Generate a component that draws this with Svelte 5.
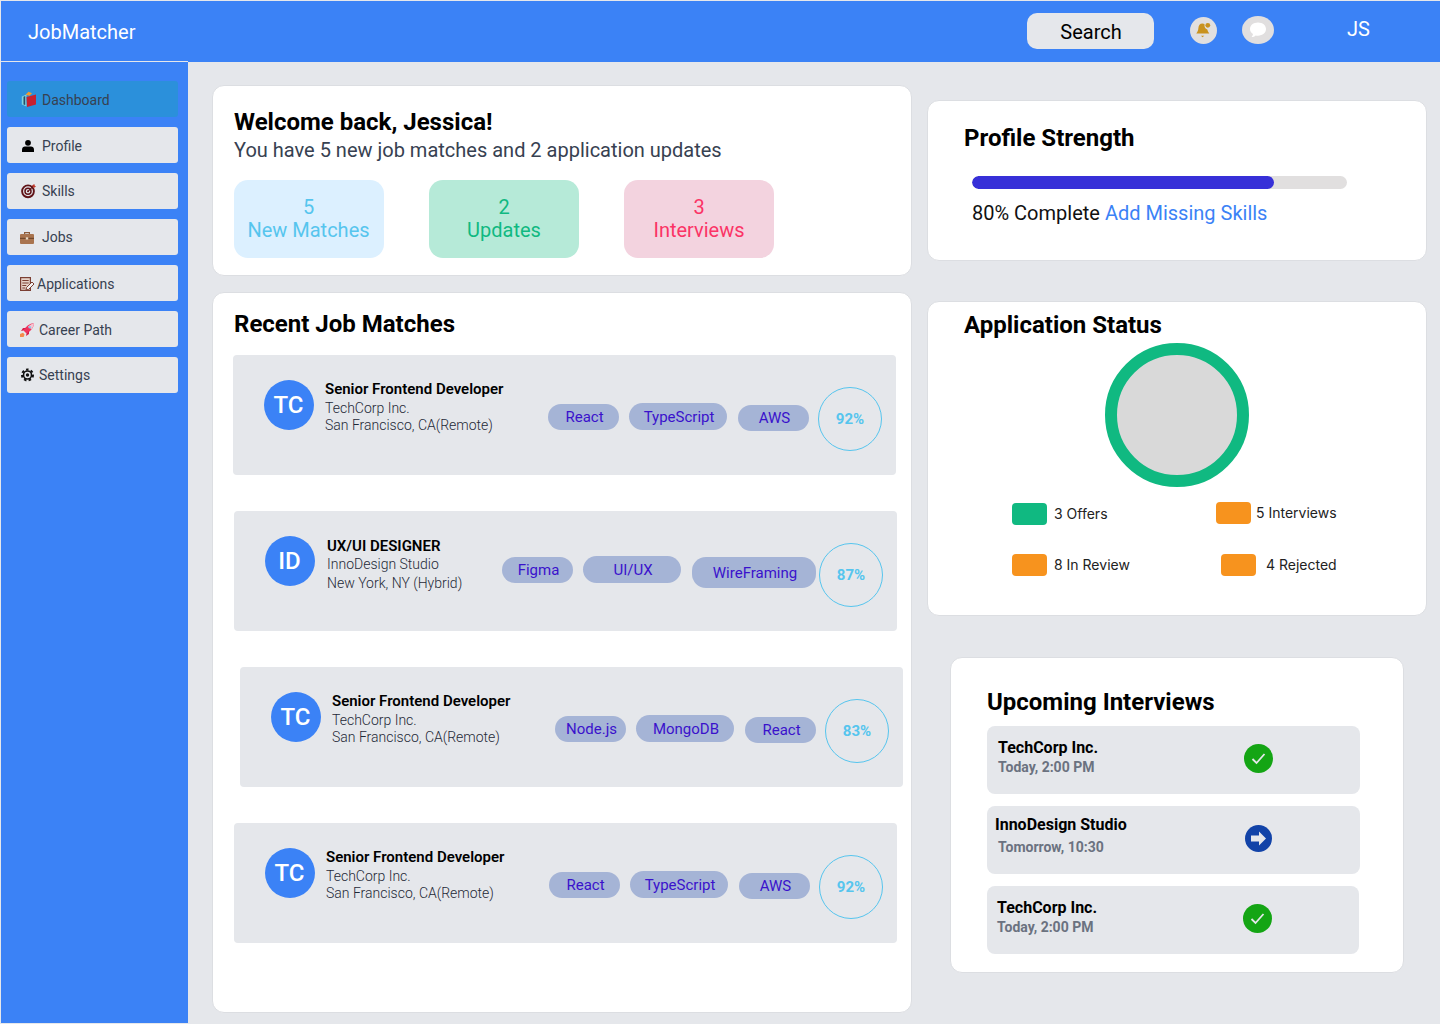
<script>
  const navItems = [
    { label: 'Dashboard', icon: 'books', active: true, gap: 6, nudge: 2 },
    { label: 'Profile', icon: 'person', gap: 6, nudge: 2 },
    { label: 'Skills', icon: 'target', gap: 6, nudge: 0 },
    { label: 'Jobs', icon: 'case', gap: 6, nudge: 0 },
    { label: 'Applications', icon: 'doc', gap: 1, nudge: 2 },
    { label: 'Career Path', icon: 'rocket', gap: 3, nudge: 2 },
    { label: 'Settings', icon: 'gear', gap: 3, nudge: 0 },
  ]

  const stats = [
    { value: 5, label: 'New Matches', tone: 'sky' },
    { value: 2, label: 'Updates', tone: 'mint' },
    { value: 3, label: 'Interviews', tone: 'rose' },
  ]

  const jobs = [
    {
      initials: 'TC',
      title: 'Senior Frontend Developer',
      company: 'TechCorp Inc.',
      place: 'San Francisco, CA(Remote)',
      score: 92,
      offset: 20,
      textGap: 11,
      tags: [
        { label: 'React', w: 71, h: 26, top: 49 },
        { label: 'TypeScript', w: 98, h: 27, top: 48 },
        { label: 'AWS', w: 71, h: 26, top: 50 },
      ],
      scoreGap: 9,
    },
    {
      initials: 'ID',
      title: 'UX/UI DESIGNER',
      company: 'InnoDesign Studio',
      place: 'New York, NY (Hybrid)',
      score: 87,
      offset: 21,
      textGap: 12,
      loose: true,
      tags: [
        { label: 'Figma', w: 71, h: 26, top: 46 },
        { label: 'UI/UX', w: 98, h: 27, top: 45 },
        { label: 'WireFraming', w: 124, h: 31, top: 46 },
      ],
      scoreGap: 3,
    },
    {
      initials: 'TC',
      title: 'Senior Frontend Developer',
      company: 'TechCorp Inc.',
      place: 'San Francisco, CA(Remote)',
      score: 83,
      offset: 27,
      textGap: 11,
      tags: [
        { label: 'Node.js', w: 71, h: 26, top: 49 },
        { label: 'MongoDB', w: 98, h: 27, top: 48 },
        { label: 'React', w: 71, h: 26, top: 50 },
      ],
      scoreGap: 9,
    },
    {
      initials: 'TC',
      title: 'Senior Frontend Developer',
      company: 'TechCorp Inc.',
      place: 'San Francisco, CA(Remote)',
      score: 92,
      offset: 21,
      textGap: 11,
      tags: [
        { label: 'React', w: 71, h: 26, top: 49 },
        { label: 'TypeScript', w: 98, h: 27, top: 48 },
        { label: 'AWS', w: 71, h: 26, top: 50 },
      ],
      scoreGap: 9,
    },
  ]

  const interviews = [
    { company: 'TechCorp Inc.', time: 'Today, 2:00 PM', kind: 'check', pad: 11, subPad: 11, width: 373, right: 87, lines: 2, lift: 6 },
    { company: 'InnoDesign Studio', time: 'Tomorrow, 10:30', kind: 'arrow', pad: 8, subPad: 11, width: 373, right: 88, lines: 5, lift: 9 },
    { company: 'TechCorp Inc.', time: 'Today, 2:00 PM', kind: 'check', pad: 10, subPad: 10, width: 372, right: 87, lines: 2, lift: 6 },
  ]
</script>

<div class="app">
  <header class="topbar">
    <div class="brand">JobMatcher</div>
    <button class="search">Search</button>
    <span class="bell">
      <svg width="19" height="19" viewBox="0 0 19 19">
        <path d="M8.500 2.500c-2.700 0-3.900 2-4.100 4.600-.2 2.500-.8 4-2.100 5.400h13c-1.100-1.200-1.700-2.500-2-3.900-2-.6-3.100-2.300-2.800-5.500-.6-.4-1.200-.6-2-.6z" fill="#c9921e" />
        <circle cx="13.800" cy="4.300" r="2.400" fill="#c9921e" />
        <path d="M7 14.800h3.200l-1.600 1.500z" fill="#c9921e" />
      </svg>
    </span>
    <span class="chat">
      <svg width="20" height="18" viewBox="0 0 20 18">
        <path d="M10 1.500c4.600 0 8 2.800 8 6.600s-3.400 6.600-8 6.600c-.8 0-1.600-.1-2.400-.3-1 .9-2.400 1.600-4 1.600.8-.8 1.300-1.800 1.400-2.900C3 11.900 2 10.100 2 8.100 2 4.300 5.400 1.500 10 1.500z" fill="#fff" />
      </svg>
    </span>
    <span class="user">JS</span>
  </header>

  <div class="body">
    <aside class="sidebar">
      {#each navItems as item}
        <a class="nav" class:active={item.active} href="#top" style="gap: {item.gap}px">
          <svg class="nav-icon" width="16" height="16" viewBox="0 0 16 16">
            {#if item.icon === 'books'}
              <path d="M5.500 3.800L8.500 .8l3.500 1.400-2.500 2.500z" fill="#f59a2c" />
              <path d="M1.800 5.500l4.700-2V15.500l-4.700-2z" fill="#7fd3e0" />
              <path d="M3.500 5.800l1.700-.7v9l-1.700-.7z" fill="#24506b" />
              <path d="M6.500 6L16 3.500v10L7 16z" fill="#c8202f" />
            {:else if item.icon === 'person'}
              <circle cx="8" cy="5.800" r="2.900" fill="#000" />
              <path d="M2 15v-2.200C2 10.800 3.400 9.600 5 9.600h6c1.600 0 3 1.200 3 3.200V15z" fill="#000" />
            {:else if item.icon === 'target'}
              <circle cx="8" cy="8.300" r="5.900" fill="none" stroke="#5f1216" stroke-width="1.900" />
              <circle cx="8" cy="8.300" r="3" fill="none" stroke="#5f1216" stroke-width="1.500" />
              <circle cx="8" cy="8.300" r="1" fill="#5f1216" />
              <path d="M8 8.300l5.500-5.500" stroke="#5f1216" stroke-width="1.200" />
              <path d="M12 2.500l2.300-1.500.5 1.800 1.200.6-2.200 1.500z" fill="#c0392b" />
            {:else if item.icon === 'case'}
              <path d="M4.600 5V3.600h4.800V5" fill="none" stroke="#8a5a3a" stroke-width="1.200" />
              <rect x="0" y="5" width="14" height="10" rx="1" fill="#a9744f" />
              <rect x="0" y="8.800" width="14" height="1.100" fill="#6d4529" />
              <rect x="5.800" y="8.300" width="2.400" height="2.200" fill="#e8d9c5" />
            {:else if item.icon === 'doc'}
              <rect x="0.600" y="2.600" width="9.800" height="12.800" fill="#e7d3c8" stroke="#7b3f33" stroke-width="1.200" />
              <path d="M2.300 5.500h6.400M2.300 8h6.400M2.300 10.500h4M2.300 13h3" stroke="#7b3f33" stroke-width="1.200" />
              <path d="M6 15l.6-2.600L12 7l2 2-5.400 5.400z" fill="#f4f4f4" stroke="#7b3f33" stroke-width="1" />
            {:else if item.icon === 'rocket'}
              <path d="M0 13l3-1.200 1.600 1.600-1 2.600H0z" fill="#f58a4b" />
              <path d="M3.500 9.500C6 5 9.500 2.500 14 2c-.3 4.500-3 8-7.500 10.500z" fill="#f0315d" />
              <path d="M8 5.500C9.800 4 11.800 3 14 2c-.2 2.300-1 4.400-2.500 6.300z" fill="#f5c6d3" />
              <circle cx="9.800" cy="6.200" r="1.300" fill="#8ec8e8" />
              <path d="M3.500 9.500L1 10l2-3h3zM6.500 12.500L6 15l3-2v-3z" fill="#d81f4b" />
            {:else}
              <circle cx="7.500" cy="8" r="4.800" fill="#111" />
              <circle cx="7.500" cy="8" r="5.500" fill="none" stroke="#111" stroke-width="2" stroke-dasharray="2.500 2.260" />
              <circle cx="7.500" cy="8" r="3.200" fill="#e5e7eb" />
              <circle cx="7.500" cy="8" r="1.700" fill="#111" />
            {/if}
          </svg>
          <span style="padding-top: {item.nudge}px">{item.label}</span>
        </a>
      {/each}
    </aside>

    <main class="main">
      <div class="col-left">
        <section class="card welcome">
          <h1>Welcome back, Jessica!</h1>
          <p class="lead">You have 5 new job matches and 2 application updates</p>
          <div class="stats">
            {#each stats as stat}
              <div class="stat {stat.tone}">
                <span>{stat.value}</span>
                <span>{stat.label}</span>
              </div>
            {/each}
          </div>
        </section>

        <section class="card matches">
          <h2>Recent Job Matches</h2>
          <div class="job-list">
            {#each jobs as job}
              <article class="job" style="margin-left: {job.offset}px">
                <div class="avatar">{job.initials}</div>
                <div class="job-info" class:loose={job.loose} style="margin-left: {job.textGap}px">
                  <h3>{job.title}</h3>
                  <p>{job.company}</p>
                  <p>{job.place}</p>
                </div>
                <div class="tags">
                  {#each job.tags as tag}
                    <span class="tag" style="width: {tag.w}px; height: {tag.h}px; margin-top: {tag.top - 25}px">{tag.label}</span>
                  {/each}
                </div>
                <div class="score" style="margin-left: {job.scoreGap}px">{job.score}%</div>
              </article>
            {/each}
          </div>
        </section>
      </div>

      <div class="col-right">
        <section class="card strength">
          <h2>Profile Strength</h2>
          <div class="track"><div class="fill" style="width: 80.5%"></div></div>
          <p class="progress">80% Complete <a href="#top">Add Missing Skills</a></p>
        </section>

        <section class="card status">
          <h2>Application Status</h2>
          <div class="donut"></div>
          <div class="legend">
            <div class="legend-row first">
              <div class="legend-item wide">
                <span class="swatch green"></span><span>3 Offers</span>
              </div>
              <div class="legend-item raised">
                <span class="swatch orange"></span><span class="near">5 Interviews</span>
              </div>
            </div>
            <div class="legend-row">
              <div class="legend-item wide pushed">
                <span class="swatch orange"></span><span>8 In Review</span>
              </div>
              <div class="legend-item">
                <span class="swatch orange"></span><span class="far">4 Rejected</span>
              </div>
            </div>
          </div>
        </section>

        <section class="card upcoming">
          <h2>Upcoming Interviews</h2>
          <div class="interview-list">
            {#each interviews as row}
              <div class="interview" style="width: {row.width}px">
                <div class="interview-info" style="gap: {row.lines}px; padding-bottom: {row.lift}px">
                  <strong style="margin-left: {row.pad}px">{row.company}</strong>
                  <span style="margin-left: {row.subPad}px">{row.time}</span>
                </div>
                {#if row.kind === 'check'}
                  <svg class="mark" style="margin-right: {row.right}px" width="29" height="29" viewBox="0 0 29 29">
                    <circle cx="14.500" cy="14.500" r="14.500" fill="#14a514" />
                    <path d="M8.500 15l4 4 8-9" fill="none" stroke="#e5e7eb" stroke-width="1.800" />
                  </svg>
                {:else}
                  <svg class="mark" style="margin-right: {row.right}px" width="27" height="27" viewBox="0 0 27 27">
                    <circle cx="13.500" cy="13.500" r="13.500" fill="#1243a8" />
                    <path d="M6 10.500h8V6.500l7 7-7 7v-4H6z" fill="#e5e7eb" />
                  </svg>
                {/if}
              </div>
            {/each}
          </div>
        </section>
      </div>
    </main>
  </div>
</div>

<style>
  :global(body) {
    margin: 0;
    background: #e5e7eb;
  }
  .app {
    width: 1440px;
    height: 1024px;
    overflow: hidden;
    font-family: Roboto, 'Liberation Sans', sans-serif;
    color: #000;
    box-sizing: border-box;
  }
  .topbar {
    height: 62px;
    box-sizing: border-box;
    border-top: 1px solid #e5e7eb;
    border-left: 1px solid #e5e7eb;
    background: #3b82f6;
    display: flex;
    align-items: center;
    color: #fff;
  }
  .brand {
    font-size: 20px;
    margin-left: 27px;
    width: 999px;
    padding-top: 1px;
  }
  .search {
    width: 127px;
    height: 36px;
    margin-top: -1px;
    padding: 2px 0 0 1px;
    border: 0;
    border-radius: 10px;
    background: #e5e7eb;
    color: #000;
    font: 20px Roboto, sans-serif;
  }
  .bell {
    width: 27px;
    height: 27px;
    margin-left: 36px;
    margin-top: -3px;
    border-radius: 50%;
    background: #e1dfdf;
    display: flex;
    align-items: center;
    justify-content: center;
  }
  .chat {
    width: 32px;
    height: 28px;
    margin-left: 25px;
    margin-top: -3px;
    border-radius: 50%;
    background: #e1dfdf;
    display: flex;
    align-items: center;
    justify-content: center;
  }
  .user {
    font-size: 20px;
    margin-left: 73px;
    margin-top: -5px;
  }
  .body {
    display: flex;
    height: 962px;
  }
  .sidebar {
    width: 188px;
    height: 962px;
    box-sizing: border-box;
    border-top: 1px solid #e5e7eb;
    border-left: 1px solid #e5e7eb;
    background: #3b82f6;
    padding: 19px 0 0 6px;
    margin-top: -1px;
    display: flex;
    flex-direction: column;
    gap: 10px;
    flex: none;
  }
  .nav {
    width: 171px;
    height: 36px;
    box-sizing: border-box;
    flex: none;
    border-radius: 3px;
    background: #e5e7eb;
    color: #374151;
    font-size: 14px;
    text-decoration: none;
    display: flex;
    align-items: center;
    padding-left: 13px;
  }
  .nav.active {
    background: #2b90db;
  }
  .nav-icon {
    flex: none;
    overflow: visible;
  }
  .main {
    display: flex;
    flex: none;
    width: 1252px;
    align-items: flex-start;
  }
  .col-left {
    width: 700px;
    margin-left: 24px;
    padding-top: 23px;
    display: flex;
    flex-direction: column;
    gap: 16px;
    flex: none;
  }
  .col-right {
    width: 500px;
    margin-left: 15px;
    padding-top: 38px;
    flex: none;
  }
  .card {
    box-sizing: border-box;
    background: #fff;
    border: 1px solid #dcdee2;
    border-radius: 12px;
  }
  h1,
  h2,
  h3,
  p {
    margin: 0;
  }
  h1,
  h2 {
    font-size: 24px;
    font-weight: 700;
    line-height: 28px;
  }
  .welcome {
    height: 191px;
    padding: 22px 21px 0;
  }
  .lead {
    font-size: 20px;
    line-height: 28px;
    color: #374151;
  }
  .stats {
    display: flex;
    gap: 45px;
    margin-top: 16px;
  }
  .stat {
    width: 150px;
    height: 78px;
    border-radius: 14px;
    box-sizing: border-box;
    padding-top: 16px;
    display: flex;
    flex-direction: column;
    align-items: center;
    font-size: 20px;
    line-height: 23px;
  }
  .sky {
    background: #dcf0ff;
    color: #56c5ee;
    padding-right: 1px;
  }
  .mint {
    background: #b6ead8;
    color: #10b981;
  }
  .rose {
    background: #f3d3df;
    color: #fb3366;
  }
  .matches {
    height: 721px;
    padding-top: 17px;
  }
  .matches h2 {
    margin-left: 21px;
  }
  .job-list {
    margin-top: 17px;
    display: flex;
    flex-direction: column;
    gap: 36px;
  }
  .job {
    width: 663px;
    height: 120px;
    box-sizing: border-box;
    background: #e5e7eb;
    border-radius: 4px;
    padding: 25px 14px 0 31px;
    display: flex;
    align-items: flex-start;
  }
  .avatar {
    width: 50px;
    height: 50px;
    flex: none;
    box-sizing: border-box;
    padding-right: 1px;
    border-radius: 50%;
    background: #3b82f6;
    color: #fff;
    font-size: 24px;
    font-weight: 500;
    display: flex;
    align-items: center;
    justify-content: center;
  }
  .job-info {
    flex: 1;
    font-size: 14px;
    font-weight: 300;
    line-height: 17px;
    color: #1f2937;
  }
  .job-info h3 {
    font-size: 15px;
    font-weight: 600;
    line-height: 18px;
    color: #000;
    margin-bottom: 2px;
  }
  .job-info.loose {
    padding-top: 1px;
  }
  .job-info.loose h3 {
    margin-bottom: 1px;
  }
  .job-info.loose p + p {
    margin-top: 2px;
  }
  .tags {
    display: flex;
    align-items: flex-start;
  }
  .tag {
    flex: none;
    box-sizing: border-box;
    padding-left: 2px;
    border-radius: 14px;
    background: #a5b4d6;
    color: #3a12cc;
    font-size: 15px;
    display: flex;
    align-items: center;
    justify-content: center;
    margin-right: 10px;
  }
  .tag:nth-child(2) {
    margin-right: 11px;
  }
  .tag:last-child {
    margin-right: 0;
  }
  .score {
    width: 64px;
    height: 64px;
    box-sizing: border-box;
    flex: none;
    margin-top: 7px;
    border: 1px solid #56c5ee;
    border-radius: 50%;
    color: #56c5ee;
    font-size: 15px;
    font-weight: 700;
    display: flex;
    align-items: center;
    justify-content: center;
  }
  .strength {
    height: 161px;
    padding: 23px 36px 0;
  }
  .track {
    width: 375px;
    height: 13px;
    margin: 24px 0 0 8px;
    border-radius: 7px;
    background: #e1dfdf;
    overflow: hidden;
  }
  .fill {
    height: 100%;
    border-radius: 7px;
    background: #3730d8;
  }
  .progress {
    margin: 12px 0 0 8px;
    font-size: 20px;
    line-height: 24px;
    color: #111;
  }
  .progress a {
    color: #3b82f6;
    text-decoration: none;
  }
  .status {
    height: 315px;
    margin-top: 40px;
    padding: 9px 36px 0;
  }
  .donut {
    width: 144px;
    height: 144px;
    box-sizing: border-box;
    margin: 4px 0 0 141px;
    border: 12px solid #10b981;
    border-radius: 50%;
    background: #d9d9d9;
  }
  .legend {
    margin: 16px 0 0 48px;
    font-family: Inter, Roboto, sans-serif;
    font-size: 14px;
    color: #222;
  }
  .legend-row {
    display: flex;
    height: 22px;
    align-items: center;
  }
  .legend-row.first {
    margin-bottom: 29px;
  }
  .legend-item {
    display: flex;
    align-items: center;
    gap: 7px;
  }
  .legend-item span:last-child {
    margin-top: -2px;
  }
  .legend-item.wide {
    width: 204px;
  }
  .legend-item.wide.pushed {
    width: 209px;
  }
  .legend-item.raised {
    margin-top: -2px;
  }
  .swatch {
    width: 35px;
    height: 22px;
    border-radius: 4px;
    flex: none;
  }
  .green {
    background: #10b981;
  }
  .orange {
    background: #f7931e;
  }
  .near {
    margin-left: -2px;
  }
  .far {
    margin-left: 3px;
  }
  .upcoming {
    width: 454px;
    height: 316px;
    margin: 41px 0 0 23px;
    padding: 30px 0 0 36px;
  }
  .interview-list {
    margin-top: 10px;
    display: flex;
    flex-direction: column;
    gap: 12px;
  }
  .interview {
    height: 68px;
    border-radius: 8px;
    background: #e5e7eb;
    display: flex;
    align-items: center;
  }
  .interview-info {
    display: flex;
    flex-direction: column;
  }
  .interview-info strong {
    font-size: 16px;
    font-weight: 700;
    line-height: 19px;
  }
  .interview-info span {
    font-size: 14px;
    font-weight: 700;
    line-height: 17px;
    color: #6b7280;
  }
  .mark {
    margin-left: auto;
    margin-bottom: 4px;
    flex: none;
  }
</style>
